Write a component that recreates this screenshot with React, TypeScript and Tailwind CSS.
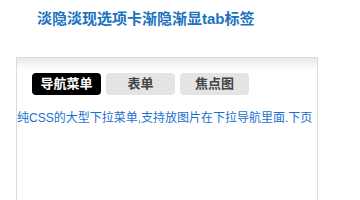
export default function App() {
  const tabs = ["导航菜单", "表单", "焦点图"];
  return (
    <div
      className="w-[360px] h-[200px] overflow-hidden bg-white"
      style={{ fontFamily: '"Liberation Sans", "Noto Sans CJK SC", sans-serif' }}
    >
      <h1 className="pt-[9px] pl-[37px] text-[15px] leading-[20px] font-bold text-[#1a72c0]">
        淡隐淡现选项卡渐隐渐显tab标签
      </h1>
      <div className="mt-[28px] ml-[16px] w-[302px] h-[200px] border border-[#dcdcdc]">
        <div className="bg-gradient-to-b from-[#e9e9e9] to-white h-[12px]" />
        <div className="flex gap-[5px] pl-[15px] pt-[3px]">
          {tabs.map((t, i) => (
            <div
              key={t}
              className={`w-[69px] h-[22px] rounded-[4px] text-[13px] leading-[22px] font-bold text-center ${
                i === 0 ? "bg-black text-white" : "bg-[#e4e4e4] text-[#444]"
              }`}
            >
              {t}
            </div>
          ))}
        </div>
        <p className="mt-[14px] text-[12px] leading-[18px] text-[#1a6fd0] whitespace-nowrap">
          纯CSS的大型下拉菜单,支持放图片在下拉导航里面.下页
        </p>
      </div>
    </div>
  );
}
